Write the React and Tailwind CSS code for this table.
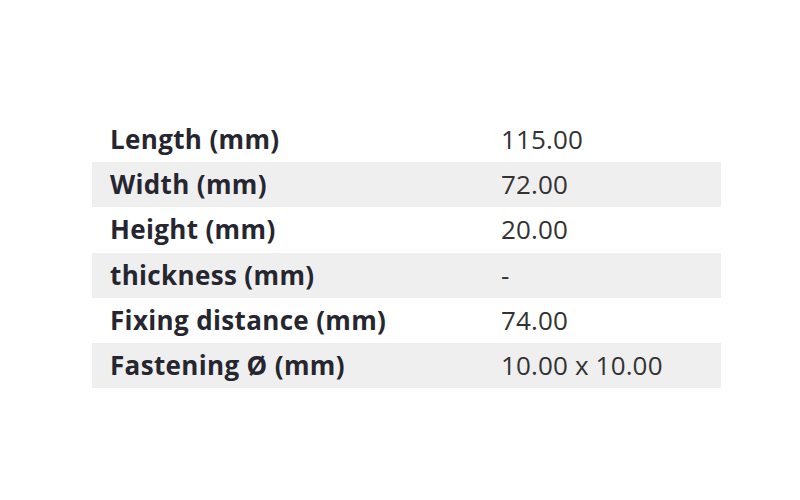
const ROWS = [
  { label: 'Length (mm)', value: '115.00' },
  { label: 'Width (mm)', value: '72.00' },
  { label: 'Height (mm)', value: '20.00' },
  { label: 'thickness (mm)', value: '-' },
  { label: 'Fixing distance (mm)', value: '74.00' },
  { label: 'Fastening Ø (mm)', value: '10.00 x 10.00' },
];

export default function App() {
  return (
    <div className="w-[800px] h-[500px] bg-white pt-[117px] pl-[92px] font-['Open_Sans',sans-serif] text-[#2e2e2e]">
      <div className="w-[629px]">
        {ROWS.map((row, i) => (
          <div
            key={row.label}
            className={`grid grid-cols-[409px_1fr] h-[45.2px] items-center text-[26px] ${i % 2 === 1 ? 'bg-[#efefef]' : ''}`}
          >
            <span className="pl-[18px] font-bold tracking-[0.35px] text-[#262630]">{row.label}</span>
            <span className="tracking-[0.15px] text-[#333]">{row.value}</span>
          </div>
        ))}
      </div>
    </div>
  );
}
